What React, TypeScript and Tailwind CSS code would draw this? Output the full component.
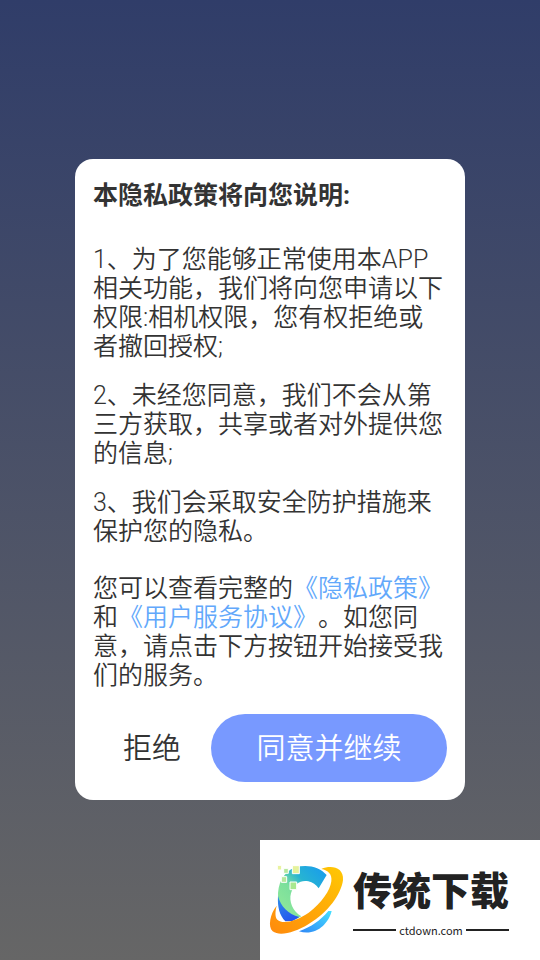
const terms = [
  "1、为了您能够正常使用本APP相关功能，我们将向您申请以下权限:相机权限，您有权拒绝或者撤回授权;",
  "2、未经您同意，我们不会从第三方获取，共享或者对外提供您的信息;",
  "3、我们会采取安全防护措施来保护您的隐私。",
]

function SiteLogo() {
  return (
    <svg viewBox="15 60 255 240" className="h-20 w-[85px] shrink-0" aria-hidden="true">
      <defs>
        <linearGradient id="arc" x1="0.1" y1="0.9" x2="0.9" y2="0.1">
          <stop offset="0" stopColor="#8fe89a" />
          <stop offset="0.4" stopColor="#7bdf9c" />
          <stop offset="0.65" stopColor="#27b4d2" />
          <stop offset="1" stopColor="#1ba0e8" />
        </linearGradient>
        <linearGradient id="wedge" x1="0" y1="0" x2="0.5" y2="1">
          <stop offset="0" stopColor="#2f8fe8" />
          <stop offset="1" stopColor="#2457ee" />
        </linearGradient>
        <linearGradient id="tail" x1="0" y1="1" x2="1" y2="0">
          <stop offset="0" stopColor="#2f86f6" />
          <stop offset="1" stopColor="#45e0ff" />
        </linearGradient>
        <linearGradient id="ring" x1="0" y1="1" x2="1" y2="0">
          <stop offset="0" stopColor="#ff8a0c" />
          <stop offset="1" stopColor="#ffc803" />
        </linearGradient>
      </defs>
      <path d="M200 105C178 80 142 72 106 82C70 96 52 130 54 175C58 208 78 234 108 238L124 229C98 214 86 184 93 160C101 130 124 119 145 124C158 127 168 134 176 145Z" fill="url(#arc)" />
      <path d="M54 168C62 200 84 222 118 231L98 243L76 244C58 226 52 200 54 168Z" fill="url(#wedge)" />
      <path d="M117 274C154 260 181 242 205 213H215C206 252 166 290 117 274Z" fill="url(#tail)" />
      <path d="M184 87C214 74 252 82 249 120C244 162 203 219 146 252C104 278 59 290 38 274C23 260 30 222 50 197C45 216 45 232 52 239C69 254 110 243 146 218C184 190 211 151 214 124C217 102 204 91 184 87Z" fill="url(#ring)" />
      <g stroke="#fff" strokeWidth="3">
        <path d="M52 76h13v14H52z" fill="#e9f3a0" />
        <path d="M71 85h14v15H71z" fill="#b5e89c" />
        <path d="M97 77h21v24H97z" fill="#e5f29b" />
        <path d="M64 110h16v17H64z" fill="#b5e89c" />
        <path d="M90 126h20v23H90z" fill="#a9e88f" />
      </g>
    </svg>
  )
}

function SiteBadge() {
  return (
    <div className="absolute right-0 bottom-0 flex h-[120px] w-[280px] items-center bg-white pl-[5px] text-[#222222]">
      <SiteLogo />
      <div className="flex w-[162px] flex-col items-center pt-2">
        <div className="text-[39px] leading-[44px] font-black whitespace-nowrap">传统下载</div>
        <div className="mt-2 flex w-full items-center gap-[3px] px-[3px]">
          <span className="h-0.5 flex-1 bg-[#222222]" />
          <span className="font-['Noto_Sans_CJK_SC'] text-[11px] leading-4">ctdown.com</span>
          <span className="h-0.5 flex-1 bg-[#222222]" />
        </div>
      </div>
    </div>
  )
}

export default function App() {
  return (
    <div className="relative flex min-h-screen items-center justify-center bg-linear-to-b/srgb from-[#303d69] to-[#666666] px-[75px] pb-0.5 font-[Roboto,'Noto_Sans_CJK_SC',sans-serif] [text-spacing-trim:space-all]" lang="zh-CN">
      <main className="w-full max-w-[390px] rounded-[18px] bg-white px-[18px] pt-[22px] pb-[18px] text-[25px] leading-[29px] font-[350] text-[#333333]">
        <h1 className="mb-[35px] font-bold">本隐私政策将向您说明:</h1>

        <div className="flex flex-col gap-5">
          {terms.map((term) => (
            <p key={term}>{term}</p>
          ))}
        </div>

        <p className="mt-7">
          您可以查看完整的
          <a href="#privacy" className="text-[#62a8fb]">《隐私政策》</a>
          和
          <a href="#agreement" className="text-[#62a8fb]">《用户服务协议》</a>
          。如您同意，请点击下方按钮开始接受我们的服务。
        </p>

        <div className="mt-6 grid grid-cols-3 text-[29px]">
          <button type="button" className="h-[68px] pt-1">拒绝</button>
          <button type="button" className="col-span-2 h-[68px] rounded-full bg-[#7899ff] pt-1 text-white">
            同意并继续
          </button>
        </div>
      </main>

      <SiteBadge />
    </div>
  )
}
